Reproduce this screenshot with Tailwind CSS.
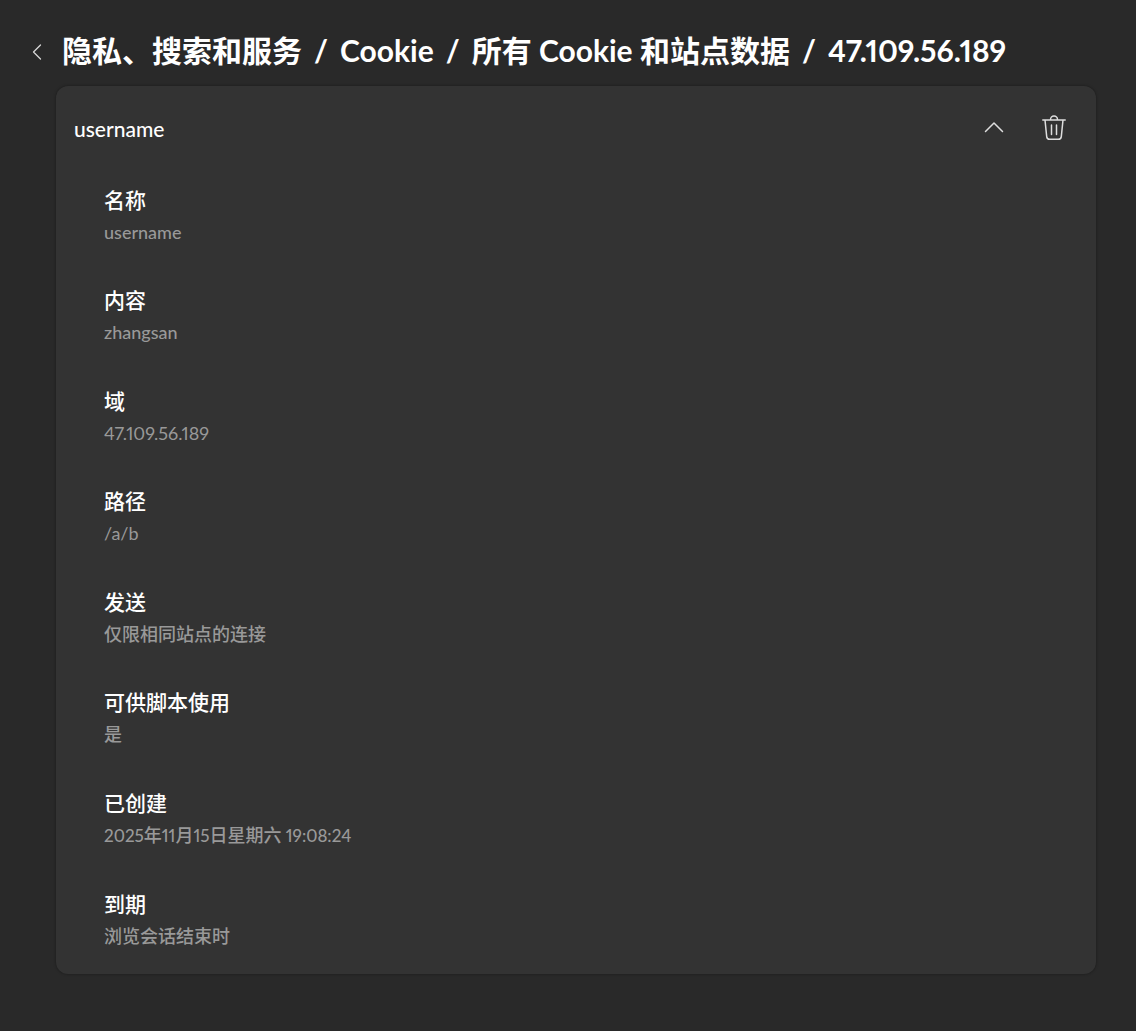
<!DOCTYPE html>
<html lang="zh-CN">
<head>
<meta charset="utf-8">
<meta name="viewport" content="width=device-width, initial-scale=1">
<title>Cookie</title>
<script src="https://cdn.jsdelivr.net/npm/@tailwindcss/browser@4"></script>
</head>
<body class="min-h-screen bg-[#292929] text-white font-['Lato','Noto_Sans_CJK_SC',sans-serif] proportional-nums">
<header class="flex items-start gap-4 pt-[26px] pl-7">
  <button type="button" aria-label="返回" class="flex h-[52px] w-[18px] items-center justify-center text-[#d6d6d6]">
    <svg class="h-[18px] w-[18px]" viewBox="0 0 18 18" fill="none" stroke="currentColor" stroke-width="1.3" stroke-linecap="round" stroke-linejoin="round" aria-hidden="true"><path d="M12.5 2 5.5 9l7 7"/></svg>
  </button>
  <nav>
    <h1 class="flex gap-3 text-[30px] leading-12 font-bold whitespace-nowrap">
      <a href="#">隐私、搜索和服务</a><span>/</span>
      <a href="#">Cookie</a><span>/</span>
      <a href="#">所有 Cookie 和站点数据</a><span>/</span>
      <span>47.109.56.189</span>
    </h1>
  </nav>
</header>
<main class="mt-2 mr-10 mb-14 ml-14 rounded-xl bg-[#333333] px-[18px] pb-[22px] shadow-[0_0_3px_rgba(0,0,0,0.4)]">
  <div class="flex h-[86px] items-center">
    <h2 class="flex-1 text-[21px] leading-8 font-medium">username</h2>
    <button type="button" aria-label="折叠" class="flex h-12 w-[60px] items-center justify-center text-[#dedede]">
      <svg class="h-6 w-6" viewBox="0 0 24 24" fill="none" stroke="currentColor" stroke-width="1.5" stroke-linecap="round" stroke-linejoin="round" aria-hidden="true"><path d="m3.5 14.500 8.500-8.500 8.500 8.500"/></svg>
    </button>
    <button type="button" aria-label="删除" class="flex h-12 w-[60px] items-center justify-center text-[#dedede] -mr-[6px]">
      <svg class="h-7 w-7" viewBox="0 0 28 28" fill="none" stroke="currentColor" stroke-width="1.5" stroke-linecap="round" stroke-linejoin="round" aria-hidden="true"><path d="M2.800 5h22.400M5 5l1.700 16.600a3 3 0 0 0 3 2.700h8.600a3 3 0 0 0 3-2.700L23 5M10.500 5V4.500a3.500 3.500 0 0 1 7 0V5M11.500 10v9.500M16.500 10v9.500"/></svg>
    </button>
  </div>
  <dl class="mt-3 ml-[30px] flex min-h-[768px] flex-col justify-between">
    <div><dt class="text-[21px] leading-8 font-medium">名称</dt><dd class="text-lg leading-8 font-medium text-[#999999]">username</dd></div>
    <div><dt class="text-[21px] leading-8 font-medium">内容</dt><dd class="text-lg leading-8 font-medium text-[#999999]">zhangsan</dd></div>
    <div><dt class="text-[21px] leading-8 font-medium">域</dt><dd class="text-lg leading-8 text-[#999999]">47.109.56.189</dd></div>
    <div><dt class="text-[21px] leading-8 font-medium">路径</dt><dd class="text-lg leading-8 text-[#999999]">/a/b</dd></div>
    <div><dt class="text-[21px] leading-8 font-medium">发送</dt><dd class="text-lg leading-8 font-medium text-[#999999]">仅限相同站点的连接</dd></div>
    <div><dt class="text-[21px] leading-8 font-medium">可供脚本使用</dt><dd class="text-lg leading-8 font-medium text-[#999999]">是</dd></div>
    <div><dt class="text-[21px] leading-8 font-medium">已创建</dt><dd class="text-lg leading-8 font-medium text-[#999999]"><span class="text-[17px]">2025</span>年<span class="text-[17px]">11</span>月<span class="text-[17px]">15</span>日星期六<span class="text-[17px]"> 19:08:24</span></dd></div>
    <div><dt class="text-[21px] leading-8 font-medium">到期</dt><dd class="text-lg leading-8 font-medium text-[#999999]">浏览会话结束时</dd></div>
  </dl>
</main>
</body>
</html>
